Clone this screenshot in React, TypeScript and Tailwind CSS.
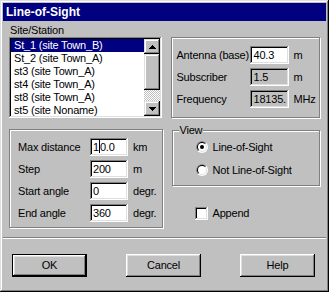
import React from "react";

const sunken =
  "shadow-[inset_-1px_-1px_0_#fff,inset_1px_1px_0_#808080,inset_-2px_-2px_0_#dfdfdf,inset_2px_2px_0_#000]";
const raised =
  "shadow-[inset_-1px_-1px_0_#000,inset_1px_1px_0_#fff,inset_-2px_-2px_0_#808080,inset_2px_2px_0_#dfdfdf]";
const raisedSb =
  "shadow-[inset_-1px_-1px_0_#000,inset_1px_1px_0_#dfdfdf,inset_-2px_-2px_0_#808080,inset_2px_2px_0_#fff]";
const etched = "border border-[#808080] shadow-[inset_1px_1px_0_#fff,1px_1px_0_#fff]";

function Arrow({ up }: { up: boolean }) {
  return (
    <svg width="7" height="4" viewBox="0 0 7 4" shapeRendering="crispEdges">
      {up ? (
        <>
          <rect x="3" y="0" width="1" height="1" fill="#000" />
          <rect x="2" y="1" width="3" height="1" fill="#000" />
          <rect x="1" y="2" width="5" height="1" fill="#000" />
          <rect x="0" y="3" width="7" height="1" fill="#000" />
        </>
      ) : (
        <>
          <rect x="0" y="0" width="7" height="1" fill="#000" />
          <rect x="1" y="1" width="5" height="1" fill="#000" />
          <rect x="2" y="2" width="3" height="1" fill="#000" />
          <rect x="3" y="3" width="1" height="1" fill="#000" />
        </>
      )}
    </svg>
  );
}

function Field({
  value,
  disabled,
  caret,
  w,
}: {
  value: string;
  disabled?: boolean;
  caret?: boolean;
  w: string;
}) {
  return (
    <div
      className={`${sunken} ${w} h-[18px] ${
        disabled ? "bg-[#c0c0c0]" : "bg-white"
      } pl-[3px] pr-[2px] overflow-hidden whitespace-nowrap leading-[18px] text-black`}
    >
      {caret ? (
        <>
          1<span className="inline-block w-[1px] h-[13px] bg-black align-[-2px]" />
          0.0
        </>
      ) : (
        value
      )}
    </div>
  );
}

function Radio({ checked }: { checked?: boolean }) {
  return (
    <svg width="12" height="12" viewBox="0 0 12 12">
      <circle cx="6" cy="6" r="6" fill="#fff" />
      <path d="M1.757 10.243 A6 6 0 0 1 10.243 1.757 Z" fill="#808080" />
      <circle cx="6" cy="6" r="5" fill="#dfdfdf" />
      <path d="M2.464 9.536 A5 5 0 0 1 9.536 2.464 Z" fill="#000" />
      <circle cx="6" cy="6" r="4" fill="#fff" />
      {checked && <circle cx="6" cy="6" r="2" fill="#000" />}
    </svg>
  );
}

const items = [
  "St_1 (site Town_B)",
  "St_2 (site Town_A)",
  "st3 (site Town_A)",
  "st4 (site Town_A)",
  "st8 (site Town_A)",
  "st5 (site Noname)",
];

export default function App() {
  return (
    <div
      className={`w-[329px] h-[292px] bg-[#c0c0c0] p-[3px] flex flex-col text-[11px] tracking-[-0.2px] text-black font-['Liberation_Sans',Arial,sans-serif] shadow-[inset_-1px_-1px_0_#000,inset_1px_1px_0_#dfdfdf,inset_-2px_-2px_0_#808080,inset_2px_2px_0_#fff]`}
    >
      {/* Title bar */}
      <div className="h-[18px] bg-[#000080] flex items-center pl-[3px] text-white font-bold text-[12px] tracking-normal">
        Line-of-Sight
      </div>

      <div className="px-[6px] flex flex-col">
        {/* Row 1 */}
        <div className="flex gap-[9px]">
          <div className="w-[154px] flex flex-col">
            <div className="h-[16px] pt-[3px] pl-[1px] leading-[13px]">Site/Station</div>
            <div className={`${sunken} h-[81px] bg-white p-[2px] flex`}>
              <div className="flex-1 overflow-hidden">
                {items.map((t, i) => (
                  <div
                    key={t}
                    className={`h-[13px] leading-[13px] pl-[3px] whitespace-nowrap ${
                      i === 0 ? "bg-[#000080] text-white" : ""
                    }`}
                  >
                    {t}
                  </div>
                ))}
              </div>
              <div className="w-[16px] flex flex-col bg-[#c0c0c0]">
                <div className={`${raisedSb} h-[15px] flex items-center justify-center`}>
                  <Arrow up />
                </div>
                <div className={`${raisedSb} h-[36px]`} />
                <div className="flex-1 bg-[repeating-conic-gradient(#fff_0_25%,#c0c0c0_0_50%)] bg-[length:2px_2px]" />
                <div className={`${raisedSb} h-[15px] flex items-center justify-center`}>
                  <Arrow up={false} />
                </div>
              </div>
            </div>
          </div>

          <div className="w-[149px] pt-[16px]">
            <div className={`${etched} h-[81px] pt-[8px] pl-[4px] flex flex-col gap-[4px]`}>
              {[
                ["Antenna (base)", "40.3", "m", false],
                ["Subscriber", "1.5", "m", true],
                ["Frequency", "18135.", "MHz", true],
              ].map(([l, v, u, d]) => (
                <div key={l as string} className="flex items-center h-[18px]">
                  <div className="w-[74px] whitespace-nowrap">{l as string}</div>
                  <Field value={v as string} disabled={d as boolean} w="w-[39px]" />
                  <div className="ml-[4px]">{u as string}</div>
                </div>
              ))}
            </div>
          </div>
        </div>

        {/* Row 2 */}
        <div className="flex gap-[9px] mt-[11px]">
          <div className={`${etched} w-[154px] h-[99px] pt-[8px] pl-[8px] flex flex-col gap-[4px]`}>
            {[
              ["Max distance", "10.0", "km", true],
              ["Step", "200", "m", false],
              ["Start angle", "0", "degr.", false],
              ["End angle", "360", "degr.", false],
            ].map(([l, v, u, c]) => (
              <div key={l as string} className="flex items-center h-[18px]">
                <div className="w-[72px] whitespace-nowrap">{l as string}</div>
                <Field value={v as string} caret={c as boolean} w="w-[38px]" />
                <div className="ml-[5px]">{u as string}</div>
              </div>
            ))}
          </div>

          <div className="w-[149px] flex flex-col">
            <div className={`${etched} relative mt-[1px] h-[56px] pt-[8px] pl-[23px] flex flex-col gap-[7px]`}>
              <span className="absolute -top-[8px] left-[6px] px-[1px] bg-[#c0c0c0] leading-[14px]">
                View
              </span>
              <div className="flex items-center h-[16px] gap-[5px]">
                <Radio checked />
                <span>Line-of-Sight</span>
              </div>
              <div className="flex items-center h-[16px] gap-[5px]">
                <Radio />
                <span>Not Line-of-Sight</span>
              </div>
            </div>
            <div className="mt-[21px] pl-[23px] flex items-center gap-[5px] h-[13px]">
              <div className={`${sunken} w-[13px] h-[13px] bg-white`} />
              <span>Append</span>
            </div>
          </div>
        </div>
      </div>

      {/* Separator */}
      <div className="mt-[9px] h-[2px] border-t border-[#808080] border-b border-b-white" />

      {/* Buttons */}
      <div className="mt-[15px] pl-[9px] flex gap-[39px]">
        <div className={`w-[75px] h-[23px] border border-black`}>
          <div className={`${raised} w-full h-full flex items-center justify-center`}>OK</div>
        </div>
        <div className={`${raised} w-[75px] h-[23px] flex items-center justify-center`}>Cancel</div>
        <div className={`${raised} w-[75px] h-[23px] flex items-center justify-center`}>Help</div>
      </div>
    </div>
  );
}
